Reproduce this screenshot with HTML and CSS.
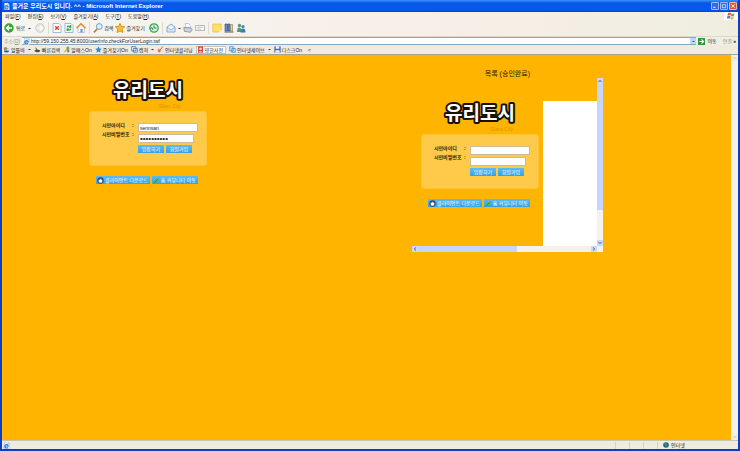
FILE: index.html
```html
<!DOCTYPE html>
<html lang="ko">
<head>
<meta charset="utf-8">
<title>즐거운 우리도시 입니다. ^^</title>
<link rel="stylesheet" href="styles.css">
</head>
<body>
<svg class="defs" aria-hidden="true">
  <symbol id="ie" viewBox="0 0 10 10"><path d="M2 0h5l2 2v8H2z" fill="#f4f8ff" stroke="#8aa5cf" stroke-width=".6"/><path d="M2.5 5.8h5A2.5 2.5 0 1 0 7 7.6" fill="none" stroke="#287bd5" stroke-width="1.5"/><path d="M1 8Q3 2 9 2.5" fill="none" stroke="#51a4e8" stroke-width=".8"/></symbol>
  <symbol id="star" viewBox="0 0 10 10"><path d="M5 .4l1.4 3 3.3.4-2.4 2.3.6 3.4L5 7.9 2.1 9.500l.6-3.400L.3 3.800l3.300-.4z"/></symbol>
  <symbol id="lens" viewBox="0 0 10 10"><path d="M4.300 5.800L1 9.400" stroke="#b57a4c" stroke-width="1.600"/><circle cx="6.300" cy="3.500" r="2.900" fill="#dcf0ff" stroke="#719bc8"/></symbol>
  <symbol id="page" viewBox="0 0 10 10"><path d="M1 .5h6L9 2.500v7H1z" fill="#fff" stroke="#8ca9cf" stroke-width=".8"/></symbol>
  <symbol id="disc" viewBox="0 0 10 10"><circle cx="5" cy="6" r="3.500" fill="#65a0df"/><circle cx="3.500" cy="4" r="2.600" fill="#bd8d50"/><path d="M2 8h6" stroke="#345" stroke-width="1.400"/><circle cx="7" cy="5" r="1.300" fill="#e8f5ff"/></symbol>
</svg>
<div class="window">
  <header class="titlebar">
    <svg class="ico small"><use href="#ie"/></svg>
    <h1>즐거운 우리도시 입니다. ^^ - Microsoft Internet Explorer</h1>
    <div class="caption">
      <button type="button" aria-label="최소화"><svg viewBox="0 0 7 7"><path d="M1.500 5h2.500" stroke="#fff" stroke-width="1.200"/></svg></button>
      <button type="button" aria-label="최대화"><svg viewBox="0 0 7 7"><path d="M1.500 2h4v3.500h-4z" fill="none" stroke="#fff" stroke-width=".8"/></svg></button>
      <button type="button" class="close" aria-label="닫기"><svg viewBox="0 0 7 7"><path d="M1.500 1.500l4 4m0-4l-4 4" stroke="#fff" stroke-width="1.100"/></svg></button>
    </div>
  </header>

  <nav class="menubar">
    <button type="button">파일(<u>F</u>)</button>
    <button type="button">편집(<u>E</u>)</button>
    <button type="button">보기(<u>V</u>)</button>
    <button type="button">즐겨찾기(<u>A</u>)</button>
    <button type="button">도구(<u>T</u>)</button>
    <button type="button">도움말(<u>H</u>)</button>
    <span class="brand"><svg viewBox="0 0 10 8"><path d="M2 1q1.500-1 3 0L4.500 3.500q-1.500-1-3 0z" fill="#e45b32"/><path d="M5.400 1.200q1.500 1 3 0L8 3.800q-1.500 1-3 0z" fill="#67b04c"/><path d="M1.400 4q1.500-1 3 0L3.900 6.700q-1.500-1-3 0z" fill="#4a7edb"/><path d="M4.800 4.300q1.500 1 3 0L7.300 7q-1.500 1-3 0z" fill="#f0bf37"/></svg></span>
  </nav>

  <div class="toolbar">
    <button type="button" class="back"><svg class="ico" viewBox="0 0 10 10"><circle cx="5" cy="5" r="4.700" fill="#36a235"/><path d="M8 5H2.800M5 2.500L2.500 5 5 7.500" fill="none" stroke="#fff" stroke-width="1.300"/></svg>뒤로<i class="drop"></i></button>
    <button type="button" aria-label="앞으로"><svg class="ico" viewBox="0 0 10 10"><circle cx="5" cy="5" r="4.300" fill="#e5e5df" stroke="#bfc0ba" stroke-width=".7"/><path d="M2 5h5M5 2.700L7.300 5 5 7.300" fill="none" stroke="#fff" stroke-width="1.200"/></svg></button>
    <i class="sep"></i>
    <button type="button" aria-label="중지"><svg class="ico" viewBox="0 0 10 10"><use href="#page"/><path d="M3.200 3.200l3.600 3.600m0-3.600L3.200 6.800" stroke="#e34228" stroke-width="1.500"/></svg></button>
    <button type="button" aria-label="새로 고침"><svg class="ico" viewBox="0 0 10 10"><use href="#page"/><path d="M3 4.500q1-2.300 3.500-1M7 5.500q-1 2.500-3.500 1.300M6.800 2v2.200H4.800M3.200 8V6h2" fill="none" stroke="#2e9b3c" stroke-width="1.100"/></svg></button>
    <button type="button" aria-label="홈"><svg class="ico" viewBox="0 0 10 10"><path d="M2 4v5.500h6.500V4L5 1z" fill="#f6f9ff" stroke="#83a3ca" stroke-width=".5"/><path d="M.5 5.300L5 .8l4.500 4.500" fill="none" stroke="#e78939" stroke-width="1.600"/><path d="M4.500 6h2v3.500h-2z" fill="#5e91ce"/></svg></button>
    <i class="sep"></i>
    <button type="button"><svg class="ico"><use href="#lens"/></svg>검색</button>
    <button type="button"><svg class="ico gold"><use href="#star"/></svg>즐겨찾기</button>
    <button type="button" class="history" aria-label="열어본 페이지"><svg class="ico" viewBox="0 0 10 10"><circle cx="5" cy="5" r="4.200" fill="#e3f7df" stroke="#37a15d" stroke-width="1.200"/><path d="M5 2.300V5h2.500M1 6l2-1.500L4 7" fill="none" stroke="#287c67"/></svg></button>
    <i class="sep"></i>
    <button type="button" aria-label="메일"><svg class="ico" viewBox="0 0 10 10"><path d="M1 4l4-3 4 3v5H1z" fill="#dcecff" stroke="#7799c8" stroke-width=".8"/><path d="M1 4l4 3 4-3" fill="#fff" stroke="#7799c8" stroke-width=".8"/></svg><i class="drop"></i></button>
    <button type="button" aria-label="인쇄"><svg class="ico" viewBox="0 0 10 10"><path d="M2 .5h4l2 4H3z" fill="#fff" stroke="#8caee0" stroke-width=".6"/><path d="M.8 4.500l7 .3 1.500 2-2 2.500-6-1z" fill="#cfd2d8" stroke="#7a7f89" stroke-width=".7"/></svg></button>
    <button type="button" aria-label="편집"><svg class="ico" viewBox="0 0 10 10"><path d="M.5 2.500h9v5h-9z" fill="#fafaf7" stroke="#a3a8ae" stroke-width=".8"/><path d="M2 4.300h6M2 6h4" stroke="#aab4c0" stroke-width=".7"/></svg></button>
    <i class="sep"></i>
    <button type="button" aria-label="메모"><svg class="ico" viewBox="0 0 10 10"><path d="M.8 1h8.400v6L7 9H.8z" fill="#ffdf64" stroke="#dab341" stroke-width=".6"/><path d="M7 9V7h2.200" fill="#fff5bd"/></svg></button>
    <button type="button" aria-label="리서치"><svg class="ico" viewBox="0 0 10 10"><path d="M1 1h2.500v7H1zM4 1h2v7H4z" fill="#6e8fbd" stroke="#29477a" stroke-width=".6"/><path d="M6.500 1.500h2V8h-2z" fill="#e8d28c" stroke="#665" stroke-width=".5"/><path d="M.5 9h9" stroke="#334" stroke-width=".8"/></svg></button>
    <button type="button" aria-label="메신저"><svg class="ico" viewBox="0 0 10 10"><circle cx="3.500" cy="2.500" r="1.700" fill="#4f9b85"/><path d="M1 9Q1 4 3.500 4.500T6 9z" fill="#4f9b85"/><circle cx="7" cy="3.600" r="1.600" fill="#4582be"/><path d="M4.500 9.500q0-4 2.500-4t2.500 4z" fill="#3d77b5"/></svg></button>
  </div>

  <form class="address">
    <label for="url">주소(<u>D</u>)</label>
    <div class="urlbox"><svg class="ico small"><use href="#ie"/></svg><input id="url" type="text" value="http://59.150.255.45:8000/userInfo.checkForUserLogin.twf"><button type="button" class="combo" aria-label="주소 목록"><i class="drop"></i></button></div>
    <button type="button" class="go"><svg class="ico small" viewBox="0 0 10 10"><path d="M0 0h10v10H0z" fill="#2d9a35"/><path d="M2 5h5M5 2l3 3-3 3" fill="none" stroke="#fff" stroke-width="1.500"/></svg>이동</button>
    <span class="more">연결 <b>»</b></span>
  </form>

  <nav class="links">
    <a href="#"><svg class="ico small"><use href="#disc"/></svg>알툴바<i class="drop"></i></a>
    <a href="#"><svg class="ico small" viewBox="0 0 10 10"><path d="M2 1l3 4 4 1-2 3H3z" fill="#51813e"/><path d="M1 7h7" stroke="#423f3a" stroke-width="2"/></svg>빠른검색</a>
    <a href="#"><svg class="ico small" viewBox="0 0 10 10"><path d="M1 9L6 2l3 2-6 5z" fill="#e6b53b"/><circle cx="7" cy="3" r="2.200" fill="#78aa4a"/><path d="M6 9V5h3v4z" fill="#5488ca"/></svg>알패스On</a>
    <a href="#"><svg class="ico small blue"><use href="#star"/></svg>즐겨찾기On</a>
    <a href="#"><svg class="ico small" viewBox="0 0 10 10"><path d="M1 1h6v6H1zM3.500 3.500h5.500V9H3.500z" fill="#eef5ff" stroke="#315f9d"/></svg>캡쳐<i class="drop"></i></a>
    <a href="#"><svg class="ico small" viewBox="0 0 10 10"><path d="M8.500.5L4 6" stroke="#a55a28" stroke-width="1.200"/><path d="M2 3.500L6 7 3 9.500.8 7z" fill="#ef7135"/></svg>인터넷클리닝</a>
    <a href="#" class="active"><svg class="ico small" viewBox="0 0 10 10"><path d="M1.500.5h7v9h-7z" fill="#c94334"/><circle cx="5" cy="4" r="2" fill="#ffd6be"/><path d="M3 8h4" stroke="#fff"/></svg>영한사전</a>
    <a href="#"><svg class="ico small" viewBox="0 0 10 10"><path d="M1 1h5v6H1zM4 3.500h5V9H4z" fill="#d6eaff" stroke="#347cc8"/></svg>인터넷세이브<i class="drop"></i></a>
    <a href="#"><svg class="ico small" viewBox="0 0 10 10"><path d="M.5.5h9v9h-9z" fill="#4968b5"/><path d="M2.500.5h5v3.500h-5zM2 6h6v3.500H2z" fill="#f5f7ff"/></svg>디스크On</a>
    <span class="chev">&lt;</span>
  </nav>

  <div class="viewport">
    <main class="page">
      <section class="col-login">
        <div class="login">
          <div class="logo"><svg class="wordmark" viewBox="0 0 80 28"><text x="40" y="22" text-anchor="middle">유리도시</text></svg><em>Glass City</em></div>
          <form class="card">
            <div class="labels"><label for="id1">시민아이디</label><span>:</span><label for="pw1">시민비밀번호</label><span>:</span></div>
            <div class="fields">
              <input id="id1" type="text" value="sennsan">
              <input id="pw1" class="pw" type="password" value="1234567890">
              <div class="actions"><button type="button">입장하기</button><button type="button">회원가입</button></div>
            </div>
          </form>
          <div class="downloads">
            <a href="#"><svg viewBox="0 0 8 8"><circle cx="4" cy="4" r="3.600" fill="#26476e"/><circle cx="4" cy="4.500" r="2.200" fill="#fff"/><path d="M2 3q2-2 4 0" stroke="#d7533c" fill="none"/></svg>클라이언트 다운로드</a>
            <a href="#"><svg viewBox="0 0 8 8"><path d="M1 7Q1 2 7 1 6 6 1 7z" fill="#4dbd3c"/><path d="M1 7l4-4" stroke="#267f2a" stroke-width=".7"/></svg>홈 커뮤니티 이동</a>
          </div>
        </div>
      </section>
      <section class="col-list">
        <h2>목록 (승인완료)</h2>
        <div class="frame">
          <div class="frame-body">
            <div class="login">
              <div class="logo"><svg class="wordmark" viewBox="0 0 80 28"><text x="40" y="22" text-anchor="middle">유리도시</text></svg><em>Glass City</em></div>
              <form class="card">
                <div class="labels"><label for="id2">시민아이디</label><span>:</span><label for="pw2">시민비밀번호</label><span>:</span></div>
                <div class="fields">
                  <input id="id2" type="text">
                  <input id="pw2" class="pw" type="password">
                  <div class="actions"><button type="button">입장하기</button><button type="button">회원가입</button></div>
                </div>
              </form>
              <div class="downloads">
                <a href="#"><svg viewBox="0 0 8 8"><circle cx="4" cy="4" r="3.600" fill="#26476e"/><circle cx="4" cy="4.500" r="2.200" fill="#fff"/><path d="M2 3q2-2 4 0" stroke="#d7533c" fill="none"/></svg>클라이언트 다운로드</a>
                <a href="#"><svg viewBox="0 0 8 8"><path d="M1 7Q1 2 7 1 6 6 1 7z" fill="#4dbd3c"/><path d="M1 7l4-4" stroke="#267f2a" stroke-width=".7"/></svg>홈 커뮤니티 이동</a>
              </div>
            </div>
            <div class="blank"></div>
          </div>
          <div class="vbar"><svg viewBox="0 0 6 6"><path d="M1.500 4L3 2.300 4.500 4"/></svg><i></i><svg viewBox="0 0 6 6"><path d="M1.500 2L3 3.700 4.500 2"/></svg></div>
          <div class="hbar"><svg viewBox="0 0 6 6"><path d="M4 1.500L2.300 3 4 4.500"/></svg><i></i><svg viewBox="0 0 6 6"><path d="M2 1.500L3.700 3 2 4.500"/></svg></div>
        </div>
      </section>
    </main>
    <div class="pagebar"><svg viewBox="0 0 6 6"><path d="M1.500 4L3 2.300 4.500 4"/></svg><svg viewBox="0 0 6 6"><path d="M1.500 2L3 3.700 4.500 2"/></svg></div>
  </div>

  <footer class="status">
    <svg class="ico small"><use href="#ie"/></svg>
    <span class="panes"><i></i><i></i><i></i><i></i></span>
    <span class="zone"><svg viewBox="0 0 6 6"><circle cx="3" cy="3" r="2.800" fill="#195b9d"/><path d="M1 2q2-2 3 0T3 5Q2 3 1 2z" fill="#3d9a55"/></svg>인터넷</span>
  </footer>
</div>
</body>
</html>
```
FILE: styles.css
```css
* { box-sizing: border-box; }
body {
  margin: 0;
  font: 5px/8px "Liberation Sans", "Noto Sans CJK KR", sans-serif;
  color: #222;
}
button, input { font: inherit; color: inherit; margin: 0; padding: 0; border: 0; background: none; }
button { display: flex; align-items: center; white-space: nowrap; }
a { color: inherit; text-decoration: none; display: flex; align-items: center; white-space: nowrap; }
svg { display: block; flex: none; }
.defs { position: absolute; width: 0; height: 0; }
.ico { width: 10px; height: 10px; }
.small { width: 7px; height: 7px; }
.gold { fill: #ffbf34; stroke: #d99220; stroke-width: 1px; }
.blue { fill: #2b8be0; }
.drop { margin-left: 2px; border: 1px solid transparent; border-top-color: #333; border-bottom: 0; width: 3px; height: 1px; }
.sep { width: 1px; height: 12px; background: #dedbd0; }

.window {
  display: flex;
  flex-direction: column;
  height: 100vh;
  background: #f1eee3;
  border: solid #0b3fc4;
  border-width: 0 2px 2px;
}
.titlebar {
  display: flex;
  align-items: center;
  gap: 2px;
  height: 12px;
  padding-left: 1px;
  background: linear-gradient(#3b93ff, #0757e5 25%, #0459ee 80%, #0347c9);
  color: #fff;
}
.titlebar h1 { margin: 0; font-size: 6px; line-height: 10px; font-weight: bold; white-space: nowrap; }
.caption { display: flex; gap: 1px; margin-left: auto; padding-right: 1px; }
.caption button { width: 8px; height: 8px; border: 1px solid #9dbcf8; border-radius: 1px; background: #3469e0; }
.caption .close { background: #df5435; border-color: #f3b5a3; }
.caption svg { width: 6px; height: 6px; }

.menubar { display: flex; align-items: center; gap: 7px; height: 8px; padding-left: 3px; background: linear-gradient(90deg, #f6f5f0, #f7efe7 60%, #efede0); }
.brand { align-self: stretch; margin-left: auto; width: 14px; background: #fff; }
.brand svg { width: 10px; height: 8px; margin: auto; }

.toolbar { display: flex; align-items: center; gap: 2px; height: 17px; padding-left: 2px; background: linear-gradient(90deg, #f6f5f0, #f7efe7 60%, #efede0); border-bottom: 1px solid #dcd9cc; }
.toolbar .sep { margin: 0 1px; }
.toolbar .back { gap: 2px; margin-right: 2px; }
.toolbar .history { margin-left: 2px; }
.toolbar button { gap: 1px; }
.toolbar .drop { margin-left: 1px; }

.address { display: flex; align-items: center; height: 8px; padding-left: 2px; }
.address label { width: 18px; color: #98968c; }
.urlbox { flex: 1; display: flex; align-items: center; height: 8px; padding-left: 1px; background: #fff; border: 1px solid #8ba6bf; border-width: 1px 0; }
.urlbox input { flex: 1; height: 6px; line-height: 6px; padding-left: 1px; }
.combo { width: 6px; height: 6px; background: #c4d5fb; }
.combo .drop { margin: auto; border-top-color: #3d5d98; }
.go { gap: 2px; margin-left: 2px; }
.more { margin: 0 2px 0 6px; color: #98968c; white-space: nowrap; }
.more b { color: #222; }

.links { display: flex; align-items: center; gap: 3px; height: 10px; padding-left: 1px; background: #efecdf; border-bottom: 1px solid #a8a48f; }
.links a { gap: 1px; }
.links .active { height: 8px; padding: 0 2px 0 0; background: #fff; border: 1px solid #c8c4b8; }
.chev { margin-left: 3px; }

.viewport { flex: 1; display: flex; min-height: 0; }
.page { flex: 1; display: grid; grid-template-columns: 41fr 60fr; background: #ffb400; padding-right: 10px; }
.col-login { display: flex; justify-content: center; align-items: flex-start; padding-top: 20px; }
.col-list { display: flex; flex-direction: column; align-items: center; padding-top: 15px; }
.col-list h2 { margin: 0; font-size: 7px; line-height: 8px; font-weight: normal; color: #221800; }

.login { width: 118px; }
.logo { display: flex; flex-direction: column; align-items: center; height: 36px; }
.wordmark { width: 80px; height: 28px; overflow: visible; }
.wordmark text {
  font: bold 19px "Noto Sans CJK KR", sans-serif;
  fill: #fff;
  stroke: #17110a;
  stroke-width: 4px;
  stroke-linejoin: round;
  paint-order: stroke;
}
.logo em { margin-right: 26px; align-self: flex-end; font-size: 5px; line-height: 6px; color: #d99500; }
.card {
  display: flex;
  height: 55px;
  padding: 10px 0 0 12px;
  border-radius: 3px;
  background: #ffc94a;
  border: 1px solid #ffc33a;
  color: #2c1d00;
}
.labels { display: grid; grid-template-columns: 30px 6px; align-content: start; row-gap: 3px; font-weight: bold; line-height: 6px; white-space: nowrap; }
.fields { display: grid; align-content: start; justify-items: start; row-gap: 2px; padding-top: 1px; }
.fields input { width: 60px; height: 9px; padding: 0 1px; background: #fff; border: 1px solid #c9bb9c; line-height: 7px; color: #222; }
.fields .pw { width: 56px; font-size: 8px; }
.actions { display: flex; gap: 2px; }
.actions button { justify-content: center; width: 26px; height: 8px; background: linear-gradient(#5cbcf4, #36a0e6); color: #fff; }
.downloads { display: flex; justify-content: center; gap: 2px; margin: 10px 0 0; padding-right: 2px; }
.downloads a { gap: 1px; height: 8px; padding: 0 2px 0 1px; background: linear-gradient(#5cbcf4, #36a0e6); color: #fff; }
.downloads svg { width: 7px; height: 7px; }

.frame { display: grid; grid-template-columns: auto 6px; grid-template-rows: auto 6px; background: #f4f2ea; }
.frame-body { display: grid; grid-template-columns: 131px 54px; height: 168px; padding-top: 20px; background: #ffb400; }
.frame-body .login { margin-left: 9px; }
.blank { background: #fff; margin-top: 3px; }
.vbar, .hbar, .pagebar { display: flex; background: #f4f2ea; }
.vbar, .pagebar { flex-direction: column; }
.vbar svg, .hbar svg, .pagebar svg { width: 6px; height: 6px; background: #c9d8fb; fill: none; stroke: #4d6185; stroke-width: 1px; }
.vbar i { flex: 1; background: #c6d5fb; }
.vbar svg:last-child { margin-top: 30px; }
.hbar i { flex: 1; margin-right: 74px; background: #c6d5fb; }
.pagebar { justify-content: space-between; align-items: center; width: 7px; }
.pagebar svg { background: #f0eee6; stroke: #c9c7bd; }

.status { display: flex; align-items: center; height: 9px; padding-left: 1px; border-top: 1px solid #c8c4b0; background: #efecdf; }
.panes { display: flex; gap: 13px; margin-left: auto; }
.panes i { width: 1px; height: 7px; background: #d5d1c3; }
.zone { display: flex; align-items: center; gap: 2px; width: 75px; margin-left: 5px; }
.zone svg { width: 6px; height: 6px; }
```
